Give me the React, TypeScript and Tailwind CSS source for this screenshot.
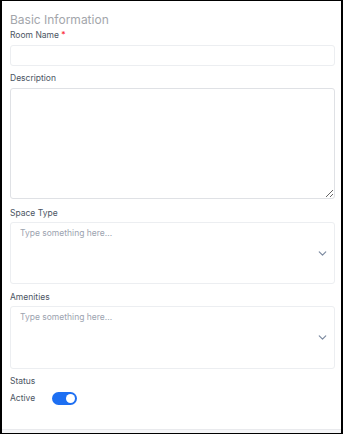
import { ChevronDown } from "lucide-react"

const font = { fontFamily: "Inter, 'Noto Sans', sans-serif" }

function Label({ text, required }: { text: string; required?: boolean }) {
  return (
    <div className="text-[8.5px] leading-[12px] text-[#4b5563]">
      {text}
      {required && <span className="text-red-500"> *</span>}
    </div>
  )
}

function MultiSelect({ h }: { h: string }) {
  return (
    <div className={`mt-[3px] ${h} rounded-[3px] border border-[#eceef1] flex justify-between pl-[9px] pr-[5px]`}>
      <span className="pt-[4px] text-[8.5px] leading-[12px] text-[#9ca3af]">Type something here...</span>
      <div className="flex items-center">
        <ChevronDown className="w-[13px] h-[13px] text-[#7c8aa0]" strokeWidth={2.2} />
      </div>
    </div>
  )
}

export default function App() {
  return (
    <div className="w-[343px] h-[434px] bg-white border-black border-t border-b border-l-2 border-r-2 flex flex-col" style={font}>
      <div className="flex-1 pl-[8px] pr-[6px] pt-[11px]">
        <h2 className="text-[12px] leading-[16px] text-[#a3a6ab]">Basic Information</h2>

        <div className="mt-[1px]">
          <Label text="Room Name" required />
          <div className="mt-[4px] h-[21px] rounded-[3px] border border-[#eceef1]" />
        </div>

        <div className="mt-[6px]">
          <Label text="Description" />
          <textarea className="mt-[4px] block w-full h-[111px] rounded-[3px] border border-[#dfe1e5] outline-none" />
        </div>

        <div className="mt-[8px]">
          <Label text="Space Type" />
          <MultiSelect h="h-[62px]" />
        </div>

        <div className="mt-[7px]">
          <Label text="Amenities" />
          <MultiSelect h="h-[63px]" />
        </div>

        <div className="mt-[6px]">
          <Label text="Status" />
          <div className="mt-[5px] flex items-center gap-[17px]">
            <span className="text-[8.5px] leading-[13px] text-[#4b5563]">Active</span>
            <div className="w-[25px] h-[13px] rounded-full bg-[#1d6ff2] flex items-center justify-end pr-[2px]">
              <div className="w-[9px] h-[9px] rounded-full bg-white" />
            </div>
          </div>
        </div>
      </div>
      <div className="h-[4px] bg-[#f4f5f7] border-t border-[#e9eaed]" />
    </div>
  )
}
